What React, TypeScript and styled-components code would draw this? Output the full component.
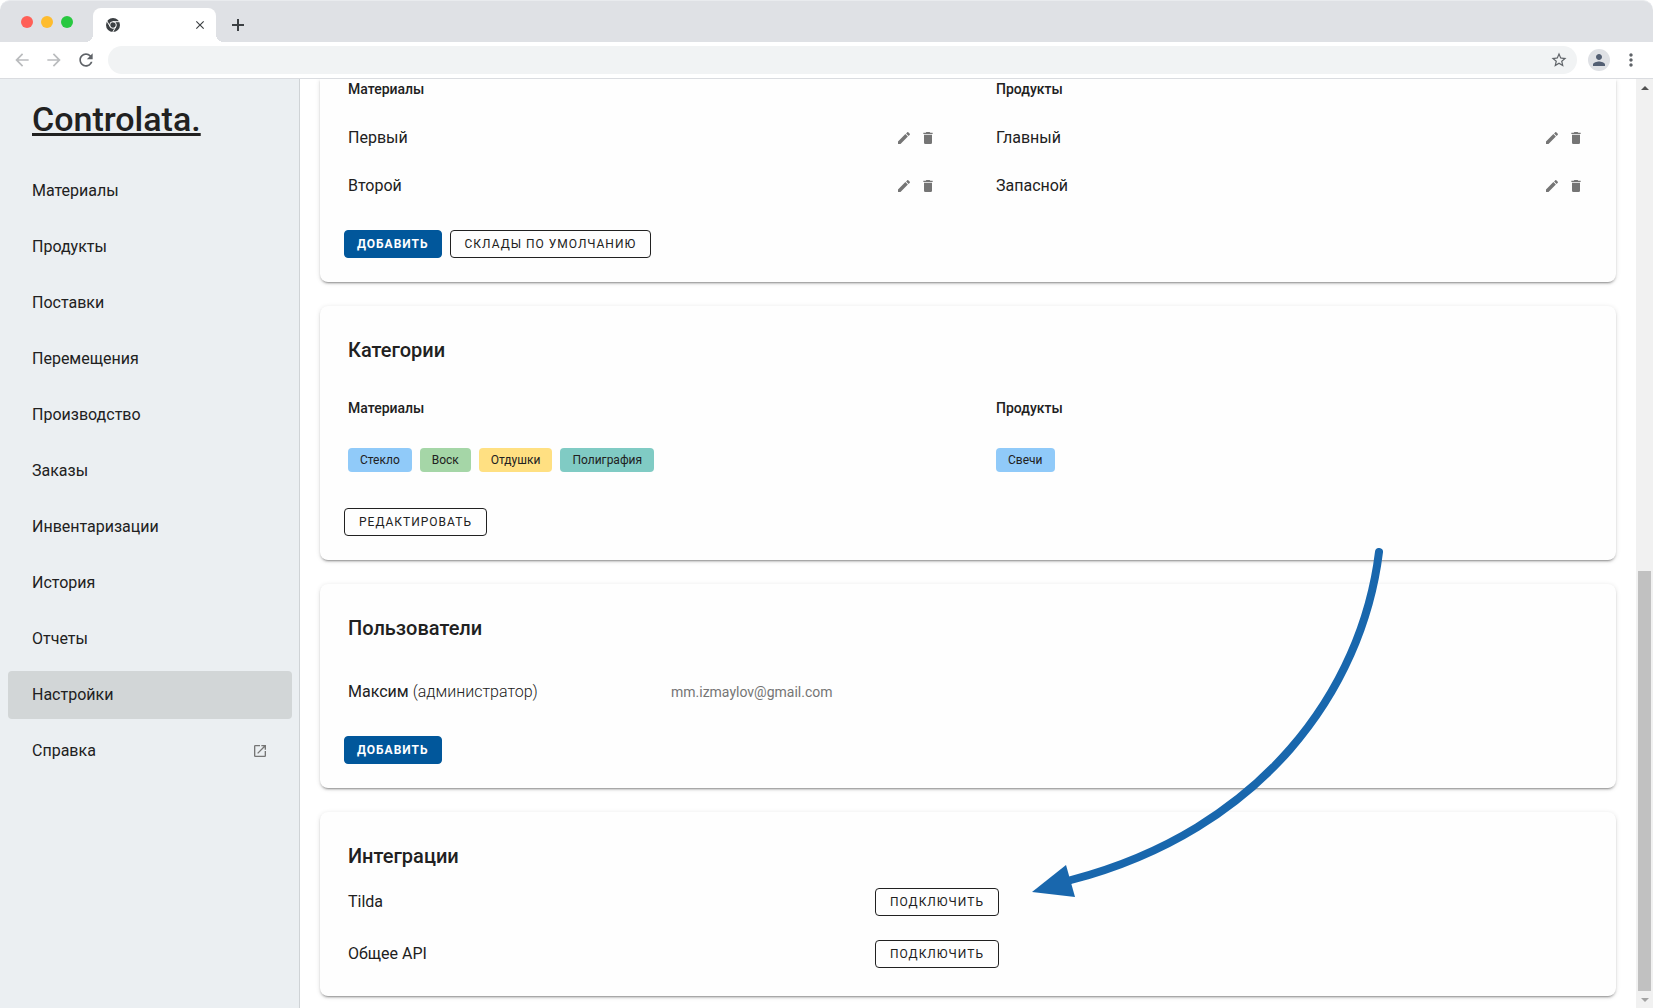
import React from "react";
import styled, { createGlobalStyle } from "styled-components";

const GlobalStyle = createGlobalStyle`
  *, *::before, *::after { box-sizing: border-box; }
  html, body, #root { height: 100%; }
  body {
    margin: 0;
    background: #fff;
    color: #212121;
    font-family: Roboto, "Liberation Sans", sans-serif;
    font-size: 16px;
    line-height: 24px;
  }
  h1, h2, h3, p, ul { margin: 0; padding: 0; }
  ul { list-style: none; }
  button { font-family: inherit; cursor: pointer; }
`;

const Window = styled.div`
  display: flex;
  flex-direction: column;
  height: 100vh;
  overflow: hidden;
`;

/* Browser chrome */

const TabStrip = styled.header`
  display: flex;
  align-items: flex-end;
  flex: none;
  height: 42px;
  padding-left: 21px;
  background: #dfe1e5;
  border-top: 1px solid #e9ebee;
  border-radius: 10px 10px 0 0;
`;

const Lights = styled.div`
  display: flex;
  gap: 8px;
  width: 72px;
  padding-bottom: 14px;
`;

const Light = styled.span<{ $color: string }>`
  width: 12px;
  height: 12px;
  border-radius: 50%;
  background: ${(p) => p.$color};
`;

const Tab = styled.div`
  position: relative;
  display: flex;
  align-items: center;
  justify-content: space-between;
  width: 123px;
  height: 34px;
  padding: 0 9px 0 13px;
  background: #fff;
  border-radius: 8px 8px 0 0;
  color: #3c4043;

  &::before,
  &::after {
    content: "";
    position: absolute;
    bottom: 0;
    width: 8px;
    height: 8px;
  }
  &::before {
    left: -8px;
    background: radial-gradient(circle at 0 0, transparent 8px, #fff 8px);
  }
  &::after {
    right: -8px;
    background: radial-gradient(circle at 100% 0, transparent 8px, #fff 8px);
  }
`;

const IconButton = styled.button<{ $size: number }>`
  display: flex;
  align-items: center;
  justify-content: center;
  flex: none;
  width: ${(p) => p.$size}px;
  height: ${(p) => p.$size}px;
  padding: 0;
  border: 0;
  background: none;
  color: inherit;

  &:disabled {
    color: #babcbe;
    cursor: default;
  }
`;

const NewTab = styled.div`
  padding: 0 0 7px 12px;
`;

const Toolbar = styled.nav`
  display: flex;
  align-items: center;
  flex: none;
  height: 37px;
  padding: 0 12px;
  border-bottom: 1px solid #dadce0;
  background: #fff;
  color: #5f6368;
`;

const NavButtons = styled.div`
  display: flex;
  gap: 12px;
  padding-right: 12px;
`;

const AddressBar = styled.div`
  display: flex;
  align-items: center;
  flex: 1;
  height: 28px;
  padding: 0 8px 0 14px;
  border-radius: 14px;
  background: #f1f3f4;
`;

const AddressInput = styled.input`
  flex: 1;
  min-width: 0;
  border: 0;
  outline: 0;
  background: none;
  font: inherit;
  font-size: 14px;
`;

const Avatar = styled.span`
  display: flex;
  align-items: center;
  justify-content: center;
  width: 22px;
  height: 22px;
  margin: 0 11px;
  border-radius: 50%;
  background: #dfe1e5;
  color: #535f73;
`;

/* Page */

const Page = styled.div`
  display: flex;
  flex: 1;
  min-height: 0;
`;

const Sidebar = styled.aside`
  flex: none;
  width: 300px;
  padding: 16px 7px 0 8px;
  background: #ebeff2;
  border-right: 1px solid #cfd3d6;
`;

const Logo = styled.a`
  display: block;
  margin: 0 0 24px 24px;
  color: #212121;
  font-size: 34px;
  font-weight: 500;
  line-height: 48px;
  text-decoration: underline;
  text-decoration-thickness: 3px;
`;

const NavList = styled.ul`
  display: flex;
  flex-direction: column;
  gap: 8px;
`;

const NavLink = styled.a<{ $active?: boolean }>`
  display: flex;
  align-items: center;
  justify-content: space-between;
  height: 48px;
  padding: 0 24px;
  border-radius: 4px;
  background: ${(p) => (p.$active ? "#d2d6d7" : "transparent")};
  color: #212121;
  text-decoration: none;

  svg { color: #757575; }
`;

const Main = styled.main`
  position: relative;
  display: flex;
  flex-direction: column;
  gap: 24px;
  flex: 1;
  min-width: 0;
  padding: 0 20px 12px;
  overflow: hidden;
`;

const Card = styled.section<{ $first?: boolean }>`
  padding: ${(p) => (p.$first ? "0 28px 24px" : "28px 28px 24px")};
  border-radius: ${(p) => (p.$first ? "0 0 8px 8px" : "8px")};
  background: #fefefe;
  box-shadow: 0 3px 1px -2px rgba(0, 0, 0, 0.2), 0 2px 2px 0 rgba(0, 0, 0, 0.14),
    0 1px 5px 0 rgba(0, 0, 0, 0.12);
`;

const Title = styled.h2`
  font-size: 20px;
  font-weight: 500;
  line-height: 32px;
`;

const Columns = styled.div<{ $top?: number }>`
  display: grid;
  grid-template-columns: 1fr 1fr;
  column-gap: 56px;
  margin-top: ${(p) => p.$top ?? 0}px;
`;

const Subtitle = styled.h3`
  font-size: 14px;
  font-weight: 500;
  line-height: 20px;
`;

const StoreList = styled.ul`
  padding-top: 15px;
`;

const StoreRow = styled.li`
  display: flex;
  align-items: center;
  justify-content: space-between;
  height: 48px;
  padding-right: 4px;
`;

const RowActions = styled.span`
  display: flex;
  gap: 8px;
  color: #757575;
`;

const Chips = styled.ul`
  display: flex;
  gap: 8px;
  padding-top: 30px;
`;

const Chip = styled.li<{ $color: string }>`
  padding: 0 12px;
  border-radius: 4px;
  background: ${(p) => p.$color};
  font-size: 12px;
  line-height: 24px;
`;

const Actions = styled.div<{ $top: number }>`
  display: flex;
  gap: 8px;
  margin: ${(p) => p.$top}px 0 0 -4px;
`;

const Button = styled.button<{ $primary?: boolean }>`
  height: 28px;
  padding: 0 ${(p) => (p.$primary ? 12 : 14)}px;
  border: 1px solid ${(p) => (p.$primary ? "#01579b" : "#212121")};
  border-radius: 4px;
  background: ${(p) => (p.$primary ? "#01579b" : "transparent")};
  color: ${(p) => (p.$primary ? "#fff" : "#212121")};
  font-size: 12px;
  font-weight: ${(p) => (p.$primary ? 700 : 400)};
  letter-spacing: 1px;
  text-transform: uppercase;
`;

const UserRow = styled.div`
  display: grid;
  grid-template-columns: 1fr 3fr;
  align-items: center;
  height: 48px;
  margin-top: 24px;
`;

const Role = styled.span`
  font-weight: 300;
`;

const Email = styled.span`
  padding-left: 13px;
  color: #757575;
  font-size: 14px;
`;

const Integrations = styled.ul`
  margin: 4px 0 -8px;
`;

const IntegrationRow = styled.li`
  display: grid;
  grid-template-columns: 17fr 23fr;
  align-items: center;
  justify-items: start;
  height: 52px;
`;

const Pointer = styled.svg`
  position: absolute;
  left: 724px;
  top: 461px;
  pointer-events: none;
`;

/* Scrollbar */

const Scrollbar = styled.div`
  display: flex;
  flex-direction: column;
  flex: none;
  width: 17px;
  background: #f1f1f1;
`;

const ScrollArrow = styled.span<{ $down?: boolean }>`
  display: flex;
  align-items: center;
  justify-content: center;
  height: 17px;

  &::before {
    content: "";
    border: 4px solid transparent;
    ${(p) =>
      p.$down
        ? "border-top-color: #a3a3a3; border-bottom: 0;"
        : "border-bottom-color: #505050; border-top: 0;"}
  }
`;

const ScrollTrack = styled.div`
  display: flex;
  align-items: flex-end;
  flex: 1;
  padding: 0 2px;
`;

const ScrollThumb = styled.span`
  width: 100%;
  height: calc(100% * 15 / 32);
  background: #c1c1c1;
`;

const Icon = ({ d, size }: { d: string; size: number }) => (
  <svg width={size} height={size} viewBox="0 0 24 24" fill="currentColor" aria-hidden="true">
    <path d={d} />
  </svg>
);

const icons = {
  back: "M20 11H7.83l5.59-5.59L12 4l-8 8 8 8 1.41-1.41L7.83 13H20v-2z",
  forward: "M12 4l-1.41 1.41L16.17 11H4v2h12.17l-5.58 5.59L12 20l8-8z",
  reload:
    "M17.65 6.35C16.2 4.9 14.21 4 12 4c-4.42 0-7.99 3.58-7.99 8s3.57 8 7.99 8c3.73 0 6.84-2.55 7.73-6h-2.08c-.82 2.33-3.04 4-5.65 4-3.31 0-6-2.69-6-6s2.69-6 6-6c1.66 0 3.14.69 4.22 1.78L13 11h7V4l-2.35 2.35z",
  star:
    "M22 9.24l-7.19-.62L12 2 9.19 8.63 2 9.24l5.46 4.73L5.82 21 12 17.27 18.18 21l-1.63-7.03L22 9.24zM12 15.4l-3.76 2.27 1-4.28-3.32-2.88 4.38-.38L12 6.1l1.71 4.04 4.38.38-3.32 2.88 1 4.28L12 15.4z",
  person:
    "M12 12c2.21 0 4-1.79 4-4s-1.79-4-4-4-4 1.79-4 4 1.79 4 4 4zm0 2c-2.67 0-8 1.34-8 4v2h16v-2c0-2.66-5.33-4-8-4z",
  more:
    "M12 8c1.1 0 2-.9 2-2s-.9-2-2-2-2 .9-2 2 .9 2 2 2zm0 2c-1.1 0-2 .9-2 2s.9 2 2 2 2-.9 2-2-.9-2-2-2zm0 6c-1.1 0-2 .9-2 2s.9 2 2 2 2-.9 2-2-.9-2-2-2z",
  close:
    "M19 6.41L17.59 5 12 10.59 6.41 5 5 6.41 10.59 12 5 17.59 6.41 19 12 13.41 17.59 19 19 17.59 13.41 12z",
  pencil:
    "M20.71 7.04c.39-.39.39-1.04 0-1.41l-2.34-2.34c-.37-.39-1.02-.39-1.41 0l-1.84 1.83 3.75 3.75M3 17.25V21h3.75L17.81 9.93l-3.75-3.75L3 17.25z",
  trash: "M19 4h-3.5l-1-1h-5l-1 1H5v2h14M6 19a2 2 0 0 0 2 2h8a2 2 0 0 0 2-2V7H6v12z",
  external:
    "M14 3v2h3.59l-9.83 9.83 1.41 1.41L19 6.41V10h2V3m-2 16H5V5h7V3H5a2 2 0 0 0-2 2v14a2 2 0 0 0 2 2h14a2 2 0 0 0 2-2v-7h-2v7z",
};

const ChromeIcon = () => (
  <svg width="14" height="14" viewBox="0 0 28 28" aria-hidden="true">
    <circle cx="14" cy="14" r="14" fill="#3c4043" />
    <circle cx="14" cy="14" r="6.6" fill="none" stroke="#fff" strokeWidth="2" />
    <path d="M14 7.4H27M8.3 17.3L1.8 6M19.7 17.3L13.2 28.6" stroke="#fff" strokeWidth="2" />
  </svg>
);

const navItems = [
  "Материалы",
  "Продукты",
  "Поставки",
  "Перемещения",
  "Производство",
  "Заказы",
  "Инвентаризации",
  "История",
  "Отчеты",
  "Настройки",
  "Справка",
];

const stores = [
  { title: "Материалы", items: ["Первый", "Второй"] },
  { title: "Продукты", items: ["Главный", "Запасной"] },
];

const categories = [
  {
    title: "Материалы",
    items: [
      { name: "Стекло", color: "#90caf9" },
      { name: "Воск", color: "#a5d6a7" },
      { name: "Отдушки", color: "#ffe082" },
      { name: "Полиграфия", color: "#80cbc4" },
    ],
  },
  { title: "Продукты", items: [{ name: "Свечи", color: "#90caf9" }] },
];

const BrowserBar = () => (
  <>
    <TabStrip>
      <Lights>
        <Light $color="#ff5f57" />
        <Light $color="#febc2e" />
        <Light $color="#28c840" />
      </Lights>
      <Tab>
        <ChromeIcon />
        <IconButton $size={14} aria-label="Закрыть вкладку">
          <Icon d={icons.close} size={14} />
        </IconButton>
      </Tab>
      <NewTab>
        <IconButton $size={20} aria-label="Новая вкладка">
          <svg width="12" height="12" viewBox="0 0 12 12" stroke="#3c4043" strokeWidth="2">
            <path d="M6 0v12M0 6h12" />
          </svg>
        </IconButton>
      </NewTab>
    </TabStrip>
    <Toolbar>
      <NavButtons>
        <IconButton $size={20} aria-label="Назад" disabled>
          <Icon d={icons.back} size={20} />
        </IconButton>
        <IconButton $size={20} aria-label="Вперёд" disabled>
          <Icon d={icons.forward} size={20} />
        </IconButton>
        <IconButton $size={20} aria-label="Обновить">
          <Icon d={icons.reload} size={20} />
        </IconButton>
      </NavButtons>
      <AddressBar>
        <AddressInput aria-label="Адрес" />
        <IconButton $size={20} aria-label="В закладки">
          <Icon d={icons.star} size={18} />
        </IconButton>
      </AddressBar>
      <Avatar>
        <Icon d={icons.person} size={18} />
      </Avatar>
      <IconButton $size={20} aria-label="Меню">
        <Icon d={icons.more} size={20} />
      </IconButton>
    </Toolbar>
  </>
);

export default function App() {
  return (
    <Window>
      <GlobalStyle />
      <BrowserBar />
      <Page>
        <Sidebar>
          <Logo href="#">Controlata.</Logo>
          <NavList>
            {navItems.map((item) => (
              <li key={item}>
                <NavLink href="#" $active={item === "Настройки"}>
                  {item}
                  {item === "Справка" && <Icon d={icons.external} size={16} />}
                </NavLink>
              </li>
            ))}
          </NavList>
        </Sidebar>
        <Main>
          <Card $first>
            <Columns>
              {stores.map((group) => (
                <div key={group.title}>
                  <Subtitle>{group.title}</Subtitle>
                  <StoreList>
                    {group.items.map((name) => (
                      <StoreRow key={name}>
                        {name}
                        <RowActions>
                          <IconButton $size={16} aria-label="Изменить">
                            <Icon d={icons.pencil} size={16} />
                          </IconButton>
                          <IconButton $size={16} aria-label="Удалить">
                            <Icon d={icons.trash} size={16} />
                          </IconButton>
                        </RowActions>
                      </StoreRow>
                    ))}
                  </StoreList>
                </div>
              ))}
            </Columns>
            <Actions $top={20}>
              <Button $primary>Добавить</Button>
              <Button>Склады по умолчанию</Button>
            </Actions>
          </Card>

          <Card>
            <Title>Категории</Title>
            <Columns $top={32}>
              {categories.map((group) => (
                <div key={group.title}>
                  <Subtitle>{group.title}</Subtitle>
                  <Chips>
                    {group.items.map((chip) => (
                      <Chip key={chip.name} $color={chip.color}>
                        {chip.name}
                      </Chip>
                    ))}
                  </Chips>
                </div>
              ))}
            </Columns>
            <Actions $top={36}>
              <Button>Редактировать</Button>
            </Actions>
          </Card>

          <Card>
            <Title>Пользователи</Title>
            <UserRow>
              <span>
                Максим <Role>(администратор)</Role>
              </span>
              <Email>mm.izmaylov@gmail.com</Email>
            </UserRow>
            <Actions $top={20}>
              <Button $primary>Добавить</Button>
            </Actions>
          </Card>

          <Card>
            <Title>Интеграции</Title>
            <Integrations>
              {["Tilda", "Общее API"].map((name) => (
                <IntegrationRow key={name}>
                  {name}
                  <Button>Подключить</Button>
                </IntegrationRow>
              ))}
            </Integrations>
          </Card>

          <Pointer width="370" height="370" viewBox="1024 540 370 370" aria-hidden="true">
            <path
              d="M1379 552C1362 690 1262 830 1071 880"
              fill="none"
              stroke="#1967ad"
              strokeWidth="8"
              strokeLinecap="round"
            />
            <path d="M1032 892L1066 865L1075 897Z" fill="#1967ad" />
          </Pointer>
        </Main>
        <Scrollbar>
          <ScrollArrow />
          <ScrollTrack>
            <ScrollThumb />
          </ScrollTrack>
          <ScrollArrow $down />
        </Scrollbar>
      </Page>
    </Window>
  );
}
